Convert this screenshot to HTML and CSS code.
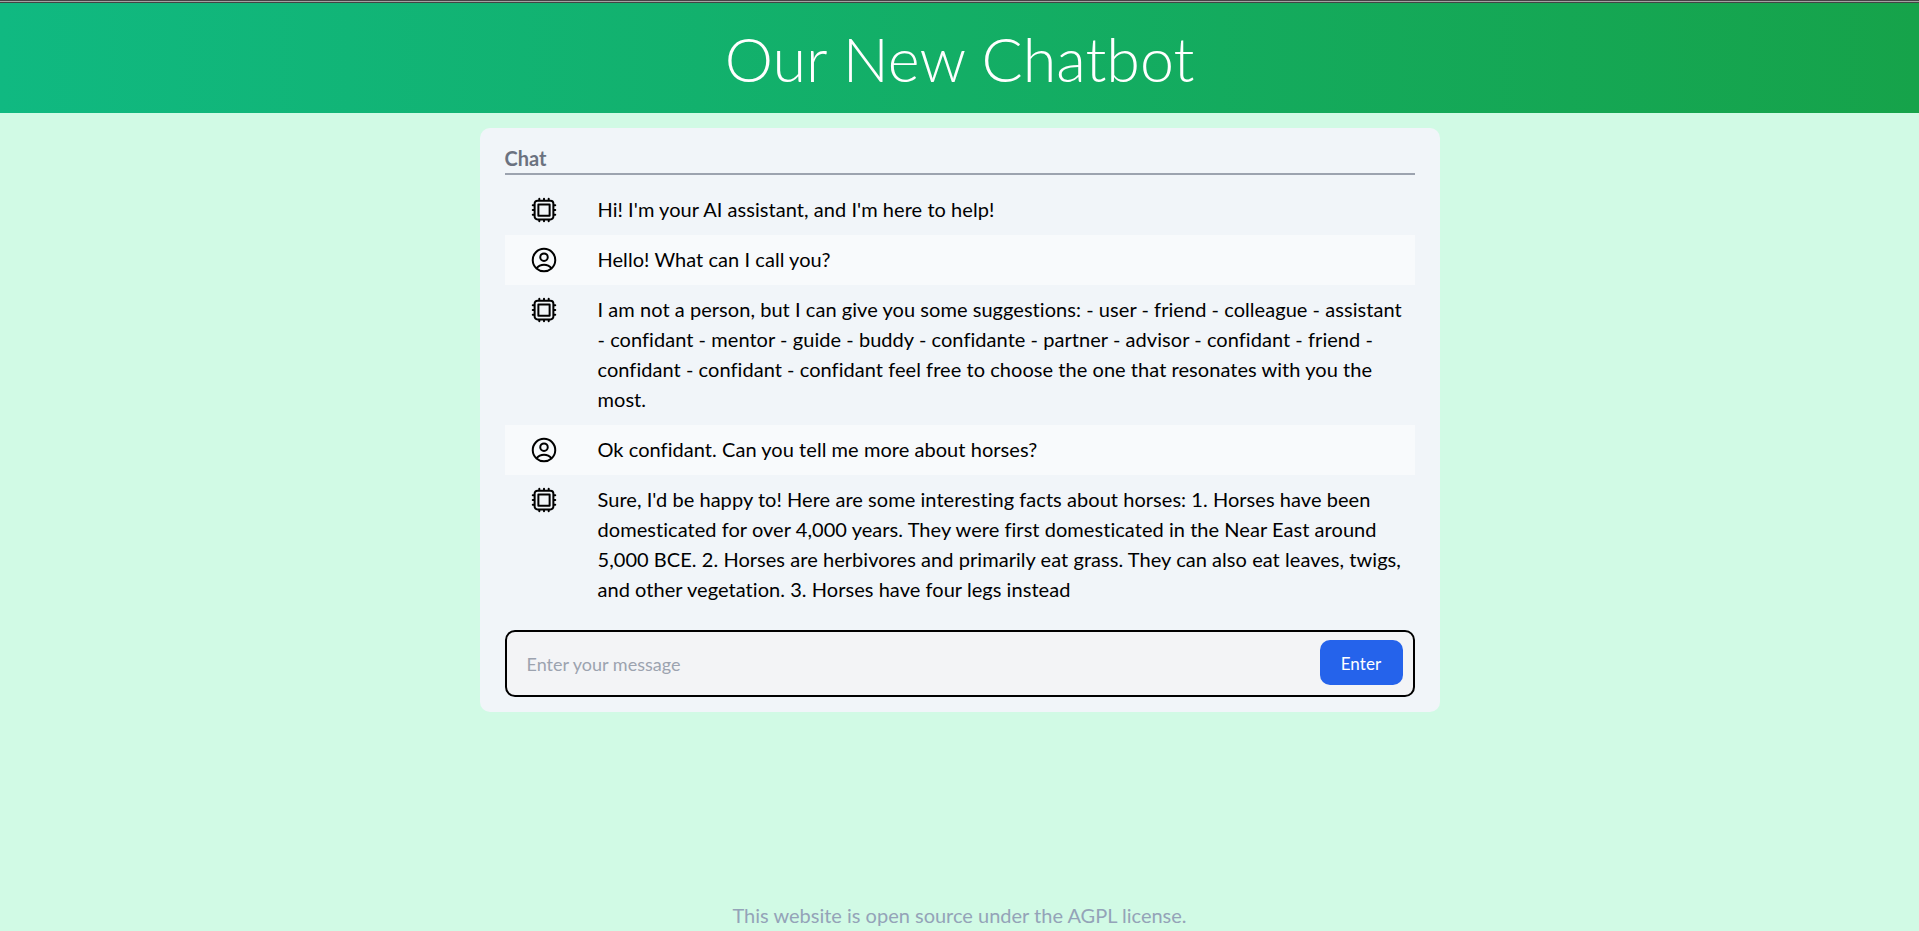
FILE: index.html
```html
<!DOCTYPE html>
<html lang="en">
<head>
  <meta charset="UTF-8">
  <meta name="viewport" content="width=device-width, initial-scale=1">
  <title>Our New Chatbot</title>
  <link rel="stylesheet" href="styles.css">
</head>
<body>

<div class="top-line"></div>

<header>
  <h1>Our New Chatbot</h1>
</header>

<main class="chat-card">
  <div class="chat-title">Chat</div>

  <div class="message">
    <div class="message-icon">
      <svg viewBox="0 0 24 24"><path d="M8.25 3v1.5M4.5 8.25H3m18 0h-1.5M4.5 12H3m18 0h-1.5m-15 3.75H3m18 0h-1.5M8.25 19.5V21M12 3v1.5m0 15V21m3.75-18v1.5m0 15V21m-9-1.5h10.5a2.25 2.25 0 002.25-2.25V6.75a2.25 2.25 0 00-2.25-2.25H6.75A2.25 2.25 0 004.5 6.75v10.5a2.25 2.25 0 002.25 2.25zm.75-12h9v9h-9v-9z"/></svg>
    </div>
    <p>Hi! I'm your AI assistant, and I'm here to help!</p>
  </div>

  <div class="message user">
    <div class="message-icon">
      <svg viewBox="0 0 24 24"><path d="M17.982 18.725A7.488 7.488 0 0012 15.75a7.488 7.488 0 00-5.982 2.975m11.963 0a9 9 0 10-11.963 0m11.963 0A8.966 8.966 0 0112 21a8.966 8.966 0 01-5.982-2.275M15 9.75a3 3 0 11-6 0 3 3 0 016 0z"/></svg>
    </div>
    <p>Hello! What can I call you?</p>
  </div>

  <div class="message">
    <div class="message-icon">
      <svg viewBox="0 0 24 24"><path d="M8.25 3v1.5M4.5 8.25H3m18 0h-1.5M4.5 12H3m18 0h-1.5m-15 3.75H3m18 0h-1.5M8.25 19.5V21M12 3v1.5m0 15V21m3.75-18v1.5m0 15V21m-9-1.5h10.5a2.25 2.25 0 002.25-2.25V6.75a2.25 2.25 0 00-2.25-2.25H6.75A2.25 2.25 0 004.5 6.75v10.5a2.25 2.25 0 002.25 2.25zm.75-12h9v9h-9v-9z"/></svg>
    </div>
    <p>I am not a person, but I can give you some suggestions: - user - friend - colleague - assistant - confidant - mentor - guide - buddy - confidante - partner - advisor - confidant - friend - confidant - confidant - confidant feel free to choose the one that resonates with you the most.</p>
  </div>

  <div class="message user">
    <div class="message-icon">
      <svg viewBox="0 0 24 24"><path d="M17.982 18.725A7.488 7.488 0 0012 15.75a7.488 7.488 0 00-5.982 2.975m11.963 0a9 9 0 10-11.963 0m11.963 0A8.966 8.966 0 0112 21a8.966 8.966 0 01-5.982-2.275M15 9.75a3 3 0 11-6 0 3 3 0 016 0z"/></svg>
    </div>
    <p>Ok confidant. Can you tell me more about horses?</p>
  </div>

  <div class="message">
    <div class="message-icon">
      <svg viewBox="0 0 24 24"><path d="M8.25 3v1.5M4.5 8.25H3m18 0h-1.5M4.5 12H3m18 0h-1.5m-15 3.75H3m18 0h-1.5M8.25 19.5V21M12 3v1.5m0 15V21m3.75-18v1.5m0 15V21m-9-1.5h10.5a2.25 2.25 0 002.25-2.25V6.75a2.25 2.25 0 00-2.25-2.25H6.75A2.25 2.25 0 004.5 6.75v10.5a2.25 2.25 0 002.25 2.25zm.75-12h9v9h-9v-9z"/></svg>
    </div>
    <p>Sure, I'd be happy to! Here are some interesting facts about horses: 1. Horses have been domesticated for over 4,000 years. They were first domesticated in the Near East around 5,000 BCE. 2. Horses are herbivores and primarily eat grass. They can also eat leaves, twigs, and other vegetation. 3. Horses have four legs instead</p>
  </div>

  <form class="chat-form">
    <input type="text" placeholder="Enter your message">
    <button type="button">Enter</button>
  </form>
</main>

<footer>This website is open source under the AGPL license.</footer>

</body>
</html>
```

FILE: styles.css
```css
* {
  box-sizing: border-box;
}
body {
  font-family: Lato, sans-serif;
  font-variant-ligatures: none;
  background-color: #d1fae5;
  margin: 0;
  min-height: 931px;
  display: flex;
  flex-direction: column;
  overflow: hidden;
}
.top-line {
  height: 3px;
  background-color: #a3a3a3;
  border-top: 1px solid #444;
  border-bottom: 1px solid #444;
}
header {
  height: 110px;
  display: flex;
  align-items: center;
  justify-content: center;
  background: linear-gradient(to right, #10b981, #16a34a);
}
h1 {
  margin: 0;
  color: white;
  font-size: 61px;
  font-weight: 300;
}
.chat-card {
  width: 960px;
  margin: 15px auto 0;
  padding: 15px 25px;
  background-color: #f1f5f9;
  border-radius: 10px;
}
.chat-title {
  height: 32px;
  color: #6b7280;
  font-size: 20px;
  font-weight: 700;
  line-height: 30px;
  border-bottom: 2px solid #9ca3af;
  margin-bottom: 10px;
}
.message {
  display: flex;
  padding: 10px 0;
}
.message.user {
  background-color: #f8fafc;
}
.message p {
  margin: -1px 0 1px;
  flex: 1;
  color: black;
  font-size: 20px;
  line-height: 30px;
  letter-spacing: 0.05px;
  padding-right: 5px;
}
.message-icon {
  width: 93px;
  padding-right: 15px;
  display: flex;
  justify-content: center;
}
.message-icon svg {
  width: 30px;
  height: 30px;
  fill: none;
  stroke: black;
  stroke-width: 1.6;
  stroke-linecap: round;
  stroke-linejoin: round;
}
.chat-form {
  display: flex;
  align-items: center;
  height: 67px;
  margin-top: 15px;
  padding: 0 10px 2px 18px;
  background-color: #f3f4f6;
  border: 2px solid black;
  border-radius: 10px;
}
.chat-form input {
  flex: 1;
  border: none;
  outline: none;
  background: transparent;
  font-family: inherit;
  font-size: 18px;
  padding-top: 4px;
}
.chat-form input::placeholder {
  color: #9ca3af;
}
.chat-form button {
  width: 83px;
  height: 45px;
  padding-top: 3px;
  border: none;
  border-radius: 10px;
  background-color: #2563eb;
  color: white;
  font-family: inherit;
  font-size: 17px;
  letter-spacing: 0.1px;
}
footer {
  margin-top: auto;
  padding-bottom: 1px;
  text-align: center;
  color: #94a3b8;
  font-size: 20px;
  line-height: 30px;
}
```
